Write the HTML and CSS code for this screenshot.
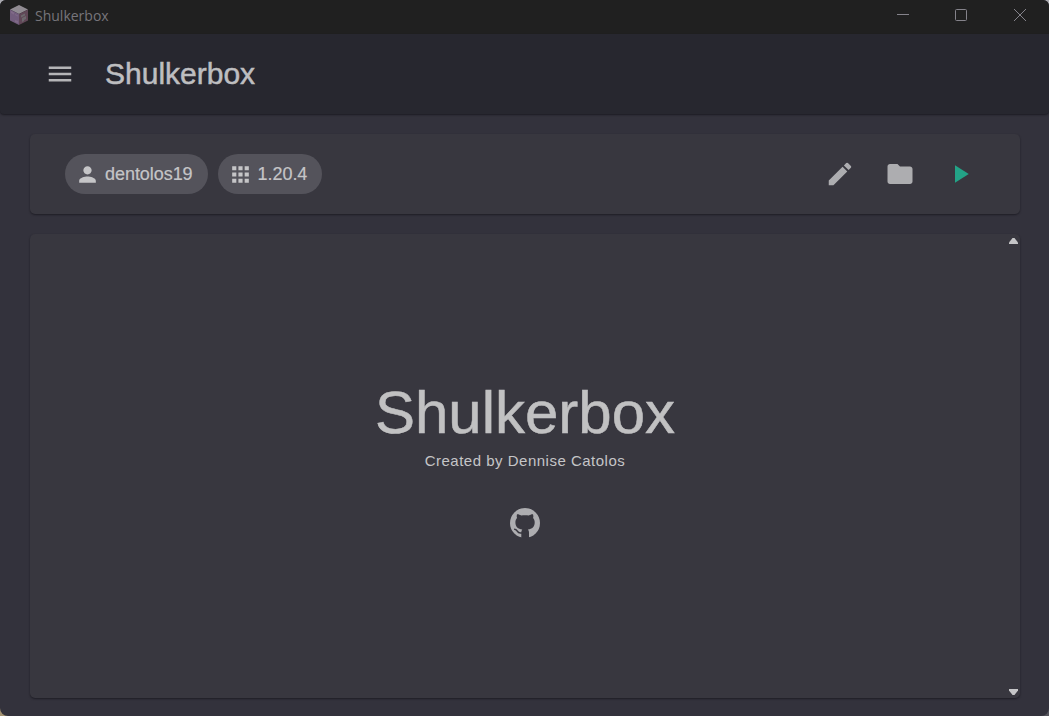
FILE: index.html
```html
<!DOCTYPE html>
<html lang="en">
<head>
<meta charset="utf-8">
<title>Shulkerbox</title>
<link rel="stylesheet" href="styles.css">
</head>
<body>
<div class="window">
  <header class="titlebar">
    <svg class="logo" viewBox="0 0 18 20">
      <path fill="#918c93" d="M9 0l9 4.500L9 9 0 4.500z"/>
      <path fill="#725d7d" d="M0 4.500L9 9v11l-9-4.500z"/>
      <path fill="#604757" d="M18 4.500L9 9v11l9-4.500z"/>
      <path fill="#806a88" d="M1 6l3 1.500v2L1 8zM5 9l3 1.500v1L5 10zM5 15l3 1v2l-3-1z"/>
      <path fill="#6c686d" d="M11 10.500l4-2v2l-4 2zM12 13l4-2v3l-2 1v1l-2 1z"/>
    </svg>
    <span class="titlebar-name">Shulkerbox</span>
    <div class="controls">
      <svg class="minimize" viewBox="0 0 12 12"><path d="M0 5.500h12"/></svg>
      <svg viewBox="0 0 12 12"><rect x=".5" y=".5" width="11" height="11" rx="1"/></svg>
      <svg viewBox="0 0 12 12"><path d="M0 0l12 12M12 0L0 12"/></svg>
    </div>
  </header>
  <nav class="appbar">
    <svg class="icon menu" viewBox="0 0 24 24"><path d="M3 18h18v-2H3v2zm0-5h18v-2H3v2zm0-7v2h18V6H3z"/></svg>
    <h1 class="appbar-title">Shulkerbox</h1>
  </nav>
  <main class="content">
    <section class="card toolbar">
      <div class="chips">
        <div class="chip">
          <svg class="chip-icon" viewBox="0 0 24 24"><path d="M12 12c2.210 0 4-1.790 4-4s-1.790-4-4-4-4 1.790-4 4 1.790 4 4 4zm0 2c-2.670 0-8 1.340-8 4v2h16v-2c0-2.660-5.330-4-8-4z"/></svg>
          <span>dentolos19</span>
        </div>
        <div class="chip">
          <svg class="chip-icon" viewBox="0 0 24 24"><path d="M4 8h4V4H4v4zm6 12h4v-4h-4v4zm-6 0h4v-4H4v4zm0-6h4v-4H4v4zm6 0h4v-4h-4v4zm6-10v4h4V4h-4zm-6 4h4V4h-4v4zm6 6h4v-4h-4v4zm0 6h4v-4h-4v4z"/></svg>
          <span>1.20.4</span>
        </div>
      </div>
      <div class="actions">
        <svg class="icon" viewBox="0 0 24 24"><path d="M3 17.250V21h3.750L17.810 9.940l-3.750-3.750L3 17.250zM20.710 7.040c.39-.39.39-1.020 0-1.410l-2.340-2.340a.996.996 0 0 0-1.410 0l-1.830 1.830 3.750 3.750 1.830-1.830z"/></svg>
        <svg class="icon" viewBox="0 0 24 24"><path d="M10 4H4c-1.100 0-1.990.9-1.990 2L2 18c0 1.100.9 2 2 2h16c1.100 0 2-.9 2-2V8c0-1.100-.9-2-2-2h-8l-2-2z"/></svg>
        <svg class="icon play" viewBox="0 0 24 24"><path d="M8 5v14l11-7z"/></svg>
      </div>
    </section>
    <section class="card hero">
      <h2 class="hero-title">Shulkerbox</h2>
      <p class="hero-text">Created by Dennise Catolos</p>
      <svg class="github" viewBox="0 0 30 30">
        <circle cx="15" cy="15" r="15"/>
        <path class="cutout" d="M7 6.200c1.300-.2 2.700.4 4.200 1.400 2.500-.6 5.100-.6 7.600 0 1.500-1 2.900-1.600 4.200-1.400.5 1.400.5 2.700.1 3.900 1.100 1.200 1.600 2.500 1.600 4.100 0 4.800-2.600 6.800-6.800 7.300.8.800 1.100 1.800 1.100 3.300V30h-7.700v-5.200c0-1.500.3-2.500 1-3.300-4.300-.5-6.900-2.500-6.900-7.300 0-1.600.5-2.900 1.600-4.100-.4-1.200-.4-2.500 0-3.900z"/>
        <path class="tail" d="M4.700 21.300c1.300.1 2 .8 2.600 1.900.8 1.600 2.100 2.200 4.700 1.700"/>
      </svg>
      <div class="scrollbar">
        <svg viewBox="0 0 9 6"><path d="M3.500 0h2L9 4.500V6H0V4.500z"/></svg>
        <svg viewBox="0 0 9 6"><path d="M0 0h9v1.500L5.500 6h-2L0 1.500z"/></svg>
      </div>
    </section>
  </main>
</div>
</body>
</html>
```

FILE: styles.css
```css
* { box-sizing: border-box; }
body {
  margin: 0;
  background: linear-gradient(90deg, #a39271 50%, #55545c 50%) bottom / 100% 50% no-repeat, #aaaab0;
  font-family: "Liberation Sans", Arial, sans-serif;
}
h1, h2, p { margin: 0; font-weight: 400; }
svg { display: block; flex: none; }
.window {
  display: flex;
  flex-direction: column;
  height: 716px;
  overflow: hidden;
  border-radius: 6px 6px 8px 8px;
  background: #33323c;
}
.titlebar {
  display: flex;
  align-items: center;
  height: 34px;
  padding: 0 23px 4px 10px;
  background: #202020;
}
.logo { width: 18px; height: 20px; }
.titlebar-name {
  margin: 2px 0 0 7px;
  font: 14px/20px "Open Sans", "Noto Sans", sans-serif;
  color: #77757b;
}
.controls { display: flex; gap: 47px; margin-left: auto; }
.controls svg {
  width: 12px;
  height: 12px;
  overflow: visible;
  fill: none;
  stroke: #85838b;
  stroke-width: 1;
}
.controls .minimize { margin-right: -1px; }
.appbar {
  position: relative;
  display: flex;
  align-items: center;
  gap: 30px;
  height: 80px;
  padding: 0 45px;
  background: #27272f;
  border-radius: 0 0 4px 4px;
  box-shadow: 0 1px 2px #1c1b22;
}
.icon { width: 30px; height: 30px; fill: #adadb0; }
.menu { fill: #b5b5b8; }
.appbar-title {
  font-size: 30px;
  line-height: 40px;
  color: #bebec0;
  -webkit-text-stroke: 0.5px #bebec0;
}
.content {
  display: flex;
  flex: 1;
  flex-direction: column;
  gap: 20px;
  padding: 20px 29px 18px 30px;
}
.card {
  border-radius: 5px;
  background: #38373f;
  box-shadow: 0 1px 2px #1e1d25;
}
.toolbar {
  display: flex;
  align-items: center;
  justify-content: space-between;
  height: 80px;
  padding: 0 45px 0 35px;
}
.chips { display: flex; gap: 10px; }
.chip {
  display: flex;
  align-items: center;
  gap: 5px;
  height: 40px;
  padding: 0 15px 0 10px;
  border-radius: 20px;
  background: #54535b;
  font-size: 18px;
  letter-spacing: -0.05px;
  color: #c5c5c7;
  -webkit-text-stroke: 0.2px #c5c5c7;
}
.chip-icon { width: 25px; height: 25px; fill: #c5c5c7; }
.actions { display: flex; gap: 30px; }
.play { fill: #23a387; }
.hero {
  position: relative;
  display: flex;
  flex: 1;
  flex-direction: column;
  align-items: center;
  justify-content: center;
  padding-bottom: 16px;
}
.hero-title {
  font-size: 60px;
  line-height: 70px;
  color: #c1c1c2;
  -webkit-text-stroke: 0.5px #c1c1c2;
}
.hero-text {
  font-size: 15px;
  line-height: 25px;
  letter-spacing: 0.5px;
  color: #c5c5c7;
}
.github { width: 30px; height: 30px; margin-top: 35px; fill: #adadb0; }
.github .cutout { fill: #38373f; }
.github .tail { fill: none; stroke: #38373f; stroke-width: 1.5; stroke-linecap: round; }
.scrollbar {
  position: absolute;
  inset: 0 2px 0 auto;
  display: flex;
  flex-direction: column;
  justify-content: space-between;
  padding: 4px 0 3px;
}
.scrollbar svg { width: 9px; height: 6px; fill: #c5c5c7; }
```
